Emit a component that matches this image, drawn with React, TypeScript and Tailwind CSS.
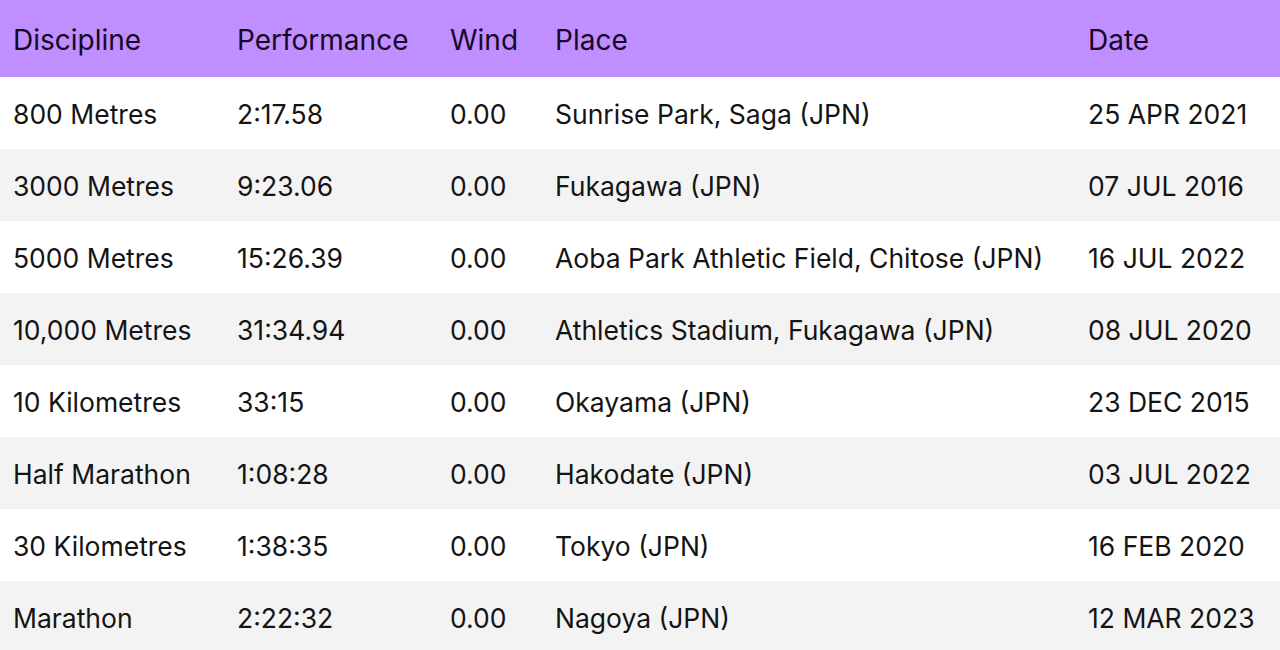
import React from "react";

const rows = [
  ["800 Metres", "2:17.58", "0.00", "Sunrise Park, Saga (JPN)", "25 APR 2021"],
  ["3000 Metres", "9:23.06", "0.00", "Fukagawa (JPN)", "07 JUL 2016"],
  ["5000 Metres", "15:26.39", "0.00", "Aoba Park Athletic Field, Chitose (JPN)", "16 JUL 2022"],
  ["10,000 Metres", "31:34.94", "0.00", "Athletics Stadium, Fukagawa (JPN)", "08 JUL 2020"],
  ["10 Kilometres", "33:15", "0.00", "Okayama (JPN)", "23 DEC 2015"],
  ["Half Marathon", "1:08:28", "0.00", "Hakodate (JPN)", "03 JUL 2022"],
  ["30 Kilometres", "1:38:35", "0.00", "Tokyo (JPN)", "16 FEB 2020"],
  ["Marathon", "2:22:32", "0.00", "Nagoya (JPN)", "12 MAR 2023"],
];

const cols = "grid grid-cols-[224px_213px_105px_533px_1fr] items-center pl-[13px]";

export default function App() {
  return (
    <div className="w-[1280px] h-[650px] overflow-hidden bg-white" style={{ fontFamily: "Inter, 'Noto Sans', sans-serif" }}>
      <div className={`${cols} h-[77px] pt-[2px] bg-[#bf8fff] text-[#160826] text-[28px]`}>
        <div>Discipline</div>
        <div>Performance</div>
        <div>Wind</div>
        <div>Place</div>
        <div>Date</div>
      </div>
      {rows.map((r, i) => (
        <div key={i} className={`${cols} h-[72px] pt-[3px] text-[#141414] text-[26.5px] ${i % 2 === 1 ? "bg-[#f3f3f3]" : "bg-white"}`}>
          {r.map((c, j) => (
            <div key={j} className="whitespace-nowrap">{c}</div>
          ))}
        </div>
      ))}
    </div>
  );
}
